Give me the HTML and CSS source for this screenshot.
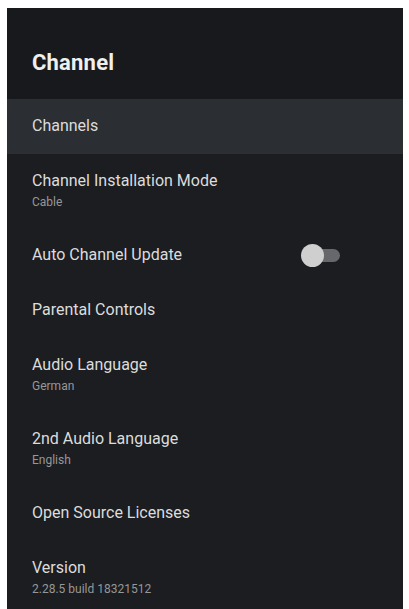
FILE: index.html
```html
<!DOCTYPE html>
<html lang="en">
<head>
<meta charset="utf-8">
<title>Channel</title>
<link rel="stylesheet" href="styles.css">
</head>
<body>
<main class="panel">
  <header class="panel-header">
    <h1 class="panel-title">Channel</h1>
  </header>
  <ul class="menu">
    <li class="menu-item is-focused">
      <span class="item-label">Channels</span>
    </li>
    <li class="menu-item">
      <div class="item-text">
        <span class="item-label">Channel Installation Mode</span>
        <span class="item-sub">Cable</span>
      </div>
    </li>
    <li class="menu-item has-toggle">
      <span class="item-label">Auto Channel Update</span>
      <span class="toggle" role="switch" aria-checked="false"><span class="toggle-thumb"></span></span>
    </li>
    <li class="menu-item">
      <span class="item-label">Parental Controls</span>
    </li>
    <li class="menu-item">
      <div class="item-text">
        <span class="item-label">Audio Language</span>
        <span class="item-sub">German</span>
      </div>
    </li>
    <li class="menu-item">
      <div class="item-text">
        <span class="item-label">2nd Audio Language</span>
        <span class="item-sub">English</span>
      </div>
    </li>
    <li class="menu-item">
      <span class="item-label">Open Source Licenses</span>
    </li>
    <li class="menu-item">
      <div class="item-text">
        <span class="item-label">Version</span>
        <span class="item-sub">2.28.5 build 18321512</span>
      </div>
    </li>
  </ul>
</main>
</body>
</html>
```
FILE: styles.css
```css
html, body {
  margin: 0;
  padding: 0;
  background: #ffffff;
}

body {
  padding: 8px 6px 0 7px;
  font-family: Roboto, "Noto Sans", "Liberation Sans", sans-serif;
  overflow: hidden;
}

.panel {
  background: #1b1d21;
  min-height: 620px;
  color: #e2e2e2;
}

.panel-header {
  padding: 42px 25px 23px;
  background: #18191d;
}

.panel-title {
  margin: 0;
  font-size: 22px;
  line-height: 26px;
  font-weight: 700;
  color: #efefef;
  letter-spacing: 0.2px;
}

.menu {
  list-style: none;
  margin: 0;
  padding: 0;
}

.menu-item {
  display: flex;
  align-items: flex-start;
  padding: 17px 24px 18px 25px;
}

.menu-item.is-focused {
  background: #2b2e32;
}

.item-text {
  display: flex;
  flex-direction: column;
}

.item-label {
  font-size: 16px;
  line-height: 20px;
  color: #dcdcdc;
}

.item-sub {
  margin-top: 3px;
  font-size: 12px;
  line-height: 16px;
  color: #979797;
}

.has-toggle {
  align-items: center;
}

.toggle {
  position: relative;
  margin-left: auto;
  margin-right: 39px;
  width: 28px;
  height: 13px;
  border-radius: 7px;
  background: #66686b;
}

.toggle-thumb {
  position: absolute;
  left: -11px;
  top: -5px;
  width: 23px;
  height: 23px;
  border-radius: 50%;
  background: #cfcfcf;
}
```
